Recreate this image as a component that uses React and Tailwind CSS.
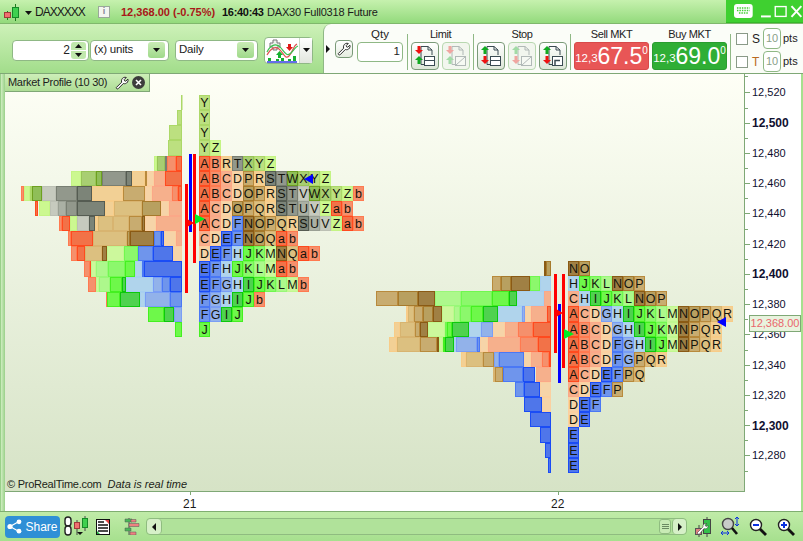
import React from "react";

const PAL = {
  A: ["#f27248", "#ff4a1e"], B: ["#f5906c", "#ff7a50"], C: ["#f6b08c", "#fba888"], D: ["#f6d4a8", "#fbd0a0"],
  E: ["#4f76ea", "#1a4cf5"], F: ["#6f95ec", "#4a78f5"], G: ["#92b2ea", "#7a9ef5"], H: ["#b0d4ec", "#a8d0f0"],
  I: ["#4fd24f", "#0cc80c"], J: ["#6ef84a", "#44f020"], K: ["#8cf86c", "#70f850"], L: ["#adf88c", "#98f878"], M: ["#ccf89c", "#c0f890"],
  N: ["#a08044", "#8a5a14"], O: ["#b8a060", "#a67a2c"], P: ["#c8ac70", "#b88a3c"], Q: ["#dcc080", "#d8b470"], R: ["#f2d095", "#f8cc88"],
  S: ["#7c8478", "#555c52"], T: ["#92988c", "#787e72"], U: ["#aab0a4", "#9aa094"], V: ["#c6cabe", "#bcc0b4"],
  W: ["#8fbe58", "#6ea020"], X: ["#a8ce72", "#98c458"], Y: ["#bce080", "#acd868"], Z: ["#ccf890", "#c4f484"],
  a: ["#f27248", "#ff4a1e"], b: ["#f5906c", "#ff7a50"],
};

const ROW = 15.125;
const rowY = (top, k) => Math.round(top + ROW * k);

const leftLetters = ["Y", "Y", "Y", "YZ", "ABRTXYZ", "ABCDPRSTWXYZ", "ABCDOPRSTVWXYZb", "ACDOPQRSTUVZab", "ACDFNOPQRSUVZab", "CDEFNOQab", "DEFHJKMNQab", "EFHJKLMab", "EFGHIJKLMb", "FGHIJb", "FGIJ", "J"];
const rightLetters = ["NO", "HJKLNOP", "CHIJKLNOP", "ACDGHIJKLMNOPQR", "ABCDGHIJKMNPQR", "ABCDFGHIJMNPQR", "ABCDFGPQR", "ACDEFPQ", "CDEFP", "DEF", "DE", "E", "E", "E"];

const leftBars = [
  [[181, 182, "Y"]],
  [[177, 182, "Y"]],
  [[169, 182, "Y"]],
  [[168, 182, "Y"]],
  [[154, 157, "Z"], [157, 165, "X"], [165, 167, "T"], [167, 176, "B"], [176, 182, "A"]],
  [[71, 81, "Z"], [81, 96, "X"], [96, 102, "W"], [102, 126, "T"], [126, 132, "S"], [132, 145, "R"], [145, 147, "P"], [147, 154, "D"], [154, 165, "C"], [165, 182, "A"]],
  [[21, 24, "b"], [24, 30, "Z"], [30, 32, "Y"], [32, 42, "W"], [42, 56, "V"], [56, 77, "T"], [77, 92, "S"], [92, 123, "R"], [123, 145, "P"], [145, 152, "D"], [152, 172, "C"], [172, 178, "B"], [178, 182, "A"]],
  [[35, 38, "a"], [39, 50, "Z"], [50, 58, "V"], [58, 66, "U"], [66, 77, "T"], [77, 105, "S"], [105, 114, "R"], [114, 142, "Q"], [142, 161, "O"], [161, 169, "D"], [169, 182, "C"]],
  [[59, 62, "b"], [62, 70, "a"], [70, 77, "Z"], [77, 89, "V"], [89, 95, "S"], [95, 98, "R"], [98, 113, "Q"], [113, 129, "Q"], [129, 142, "P"], [142, 145, "N"], [145, 156, "D"], [156, 182, "C"]],
  [[68, 71, "b"], [71, 93, "a"], [93, 127, "Q"], [127, 130, "O"], [130, 154, "N"], [154, 161, "F"], [161, 164, "E"], [164, 176, "D"], [176, 182, "C"]],
  [[71, 77, "b"], [77, 85, "a"], [85, 102, "Q"], [102, 107, "N"], [107, 124, "M"], [124, 138, "K"], [138, 153, "F"], [153, 173, "E"], [173, 182, "D"]],
  [[84, 90, "b"], [90, 91, "a"], [91, 96, "M"], [96, 108, "L"], [108, 125, "K"], [125, 135, "J"], [135, 142, "H"], [142, 144, "F"], [144, 182, "E"]],
  [[88, 96, "b"], [96, 99, "M"], [99, 110, "L"], [110, 122, "J"], [122, 126, "I"], [126, 153, "H"], [153, 162, "G"], [162, 170, "F"], [170, 182, "E"]],
  [[106, 107, "b"], [107, 120, "J"], [120, 140, "I"], [140, 145, "H"], [145, 170, "G"], [170, 182, "F"]],
  [[148, 164, "J"], [164, 174, "I"], [174, 182, "G"]],
  [[175, 182, "J"]],
];

const rightBars = [
  [[544, 546, "N"], [546, 551, "O"]],
  [[492, 501, "P"], [501, 511, "O"], [511, 530, "N"], [530, 540, "K"], [540, 551, "H"]],
  [[376, 398, "P"], [398, 418, "O"], [418, 435, "N"], [435, 461, "L"], [461, 492, "K"], [492, 509, "J"], [509, 517, "I"], [517, 544, "H"], [544, 551, "C"]],
  [[406, 408, "R"], [408, 414, "Q"], [414, 423, "P"], [423, 433, "O"], [433, 442, "N"], [442, 454, "M"], [454, 460, "L"], [460, 471, "K"], [471, 483, "J"], [483, 498, "I"], [498, 522, "H"], [522, 525, "G"], [525, 531, "D"], [531, 547, "C"], [547, 551, "A"]],
  [[394, 400, "R"], [400, 415, "Q"], [415, 420, "P"], [420, 428, "N"], [428, 445, "M"], [445, 447, "K"], [447, 452, "J"], [452, 469, "I"], [469, 481, "H"], [481, 493, "G"], [493, 505, "D"], [505, 518, "C"], [518, 533, "B"], [533, 551, "A"]],
  [[389, 397, "R"], [397, 420, "Q"], [420, 437, "P"], [437, 439, "N"], [439, 443, "M"], [443, 445, "J"], [445, 454, "I"], [454, 456, "H"], [456, 477, "G"], [477, 480, "F"], [480, 488, "D"], [488, 520, "C"], [520, 538, "B"], [538, 551, "A"]],
  [[461, 466, "R"], [466, 483, "Q"], [483, 494, "P"], [494, 499, "G"], [499, 524, "F"], [524, 531, "D"], [531, 542, "C"], [542, 549, "B"], [549, 551, "A"]],
  [[493, 495, "Q"], [495, 503, "P"], [503, 523, "F"], [523, 535, "E"], [536, 551, "C"]],
  [[515, 524, "F"], [524, 540, "E"], [540, 551, "D"]],
  [[524, 542, "E"], [542, 551, "D"]],
  [[530, 551, "E"]],
  [[540, 551, "E"]],
  [[545, 551, "E"]],
  [[548, 551, "E"]],
];

function Cell({ x, y, w, h, c }) {
  const [fill, stroke] = PAL[c];
  return <rect x={x + 0.5} y={y + 0.5} width={Math.max(w - 1, 0.5)} height={h - 1} fill={fill} stroke={stroke} />;
}

function Bars({ rows, top }) {
  return rows.map((segs, k) => {
    const y = rowY(top, k);
    const h = rowY(top, k + 1) - y;
    return segs.map(([a, b, c], i) => <Cell key={k + "-" + i} x={a} y={y} w={b - a} h={h} c={c} />);
  });
}

function Letters({ rows, left, top }) {
  return rows.map((s, k) => {
    const y = rowY(top, k);
    const h = rowY(top, k + 1) - y;
    return [...s].map((c, i) => (
      <g key={k + "-" + i}>
        <Cell x={left + i * 11} y={y} w={11} h={h} c={c} />
        <text x={left + i * 11 + 5.5} y={y + 12} textAnchor="middle" fontSize="12.5" fill="#14140c">{c}</text>
      </g>
    ));
  });
}

function Chart() {
  return (
    <svg className="block h-[417px] w-[740px]" viewBox="5 74 740 417">
      <Bars rows={leftBars} top={95} />
      <Bars rows={rightBars} top={261} />
      <Letters rows={leftLetters} left={199} top={95} />
      <Letters rows={rightLetters} left={568} top={261} />
      <rect x="185" y="184" width="3" height="109" fill="#ff0000" />
      <rect x="189" y="154" width="3" height="78" fill="#0000ff" />
      <rect x="193" y="154" width="3" height="109" fill="#ff0000" />
      <path d="M187 219 L194 223 L187 227Z" fill="#ff0000" />
      <path d="M195 214 L205 219 L195 224Z" fill="#00ee22" />
      <path d="M313 174 L304 179 L313 184Z" fill="#0000ff" />
      <rect x="554" y="274" width="3" height="79" fill="#ff0000" />
      <rect x="558" y="304" width="3" height="79" fill="#0000ff" />
      <rect x="562" y="274" width="3" height="94" fill="#ff0000" />
      <path d="M556 309 L563 313 L556 317Z" fill="#ff0000" />
      <path d="M564 329 L574 334 L564 339Z" fill="#00ee22" />
      <path d="M726 317 L717 322 L726 327Z" fill="#0000ff" />
    </svg>
  );
}

const AXIS = [
  ["12,520"], ["12,500", 1], ["12,480"], ["12,460"], ["12,440"], ["12,420"], ["12,400", 1],
  ["12,380"], ["12,360"], ["12,340"], ["12,320"], ["12,300", 1], ["12,280"],
];

function Axis() {
  return (
    <div className="relative flex w-[56px] flex-col bg-white text-[#101030]">
      <div className="h-[11.4px] pt-[2.2px]"><div className="h-px w-[3px] bg-[#7fa876]" /></div>
      {AXIS.map(([t, b]) => (
        <React.Fragment key={t}>
          <div className="flex h-[15.125px] items-center">
            <div className="h-px w-[5px] bg-[#7fa876]" />
            <span className={b ? "ml-[2px] text-[12px] leading-none font-bold" : "ml-[2px] text-[11px] leading-none"}>{t}</span>
          </div>
          <div className="flex h-[15.125px] items-center"><div className="h-px w-[3px] bg-[#7fa876]" /></div>
        </React.Fragment>
      ))}
      <div className="absolute top-[241px] left-[4px] flex h-[17px] w-[52px] items-center justify-center border border-[#7fa876] bg-[#e9f3de] text-[11px] leading-none text-[#e9666c]">12,368.00</div>
    </div>
  );
}

function Candles() {
  return (
    <svg width="18" height="18" viewBox="0 0 18 18" className="block">
      <path d="M3.5 7v9M11.5 0v17" stroke="#1e7a1e" strokeWidth="1" />
      <rect x="0.5" y="8.5" width="6" height="5" fill="#f07070" stroke="#a03a3a" />
      <rect x="8.5" y="3.5" width="6" height="10" fill="#3fd04f" stroke="#168a28" />
    </svg>
  );
}

function Tri({ dir = "down", className = "" }) {
  const d = { down: "M0 0h7L3.5 4z", right: "M0 0v8l4-4z", left: "M4 0v8L0 4z", up: "M0 4h7L3.5 0z" }[dir];
  const box = dir === "down" || dir === "up" ? [7, 4] : [4, 8];
  return <svg width={box[0]} height={box[1]} viewBox={`0 0 ${box[0]} ${box[1]}`} className={"block " + className}><path d={d} fill="#111" /></svg>;
}

function Wrench({ size = 14, stroke = "#222", fill = "#fff" }) {
  return (
    <svg width={size} height={size} viewBox="0 0 16 16" className="block">
      <path d="M1.5 13.2 7.6 7.1C7 5 7.7 2.9 9.6 1.9c1.1-.6 2.3-.6 3.3-.2L10.6 4l.3 1.5 1.4.4 2.4-2.3c.4 1.1.3 2.4-.4 3.4-1.1 1.6-3 2.2-4.8 1.6l-6 6c-.9.6-2.6-.6-2-1.4Z" fill={fill} stroke={stroke} strokeWidth="1.1" strokeLinejoin="round" />
    </svg>
  );
}

function Arrow({ x, y, up, color }) {
  const d = up
    ? `M${x} ${y + 4}L${x + 4} ${y}L${x + 8} ${y + 4}H${x + 5.5}V${y + 8}H${x + 2.5}V${y + 4}Z`
    : `M${x + 2.5} ${y}H${x + 5.5}V${y + 4}H${x + 8}L${x + 4} ${y + 8}L${x} ${y + 4}H${x + 2.5}Z`;
  return <path d={d} fill={color} />;
}

function TradeIcon({ top, kind, off }) {
  const red = "#ee1111", green = "#11aa22", ink = "#3a4a52";
  return (
    <svg width="22" height="22" viewBox="0 0 22 22" className={off ? "block opacity-35" : "block"}>
      <path d="M7 1.5H14L18 5V10M14 1.5V5H18" fill="none" stroke={ink} />
      <path d="M7 1.5V19.5H11" fill="none" stroke={ink} />
      <Arrow x={1} y={1} up={!top} color={top ? red : green} />
      <Arrow x={1} y={11} up={top} color={top ? green : red} />
      {kind === "rows" && <><rect x="10.5" y="11.5" width="10" height="4" fill="#fff" stroke={ink} /><rect x="10.5" y="15.5" width="10" height="5" fill="#fff" stroke={ink} /></>}
      {kind === "slash" && <><rect x="10.5" y="11.5" width="10" height="9" fill="#fff" stroke={ink} /><path d="M11 20L20 12" stroke={ink} /></>}
      {kind === "step" && <><rect x="10.5" y="11.5" width="10" height="9" fill="#fff" stroke={ink} /><path d="M13 20.5V15.5H18" fill="none" stroke={ink} strokeWidth="1.5" /></>}
    </svg>
  );
}

function TradeBtn(props) {
  return (
    <div className={"flex h-[28px] w-[28px] items-center justify-center rounded-[4px] border " + (props.off ? "border-[#b8d8b0] bg-[#f2f6ee]" : "border-[#7a9a78] bg-linear-to-b from-[#ffffff] to-[#dde6d8]")}>
      <TradeIcon {...props} />
    </div>
  );
}

const Divider = () => <div className="mt-[10px] h-[36px] w-px bg-[#8fb885]" />;

function Select({ label, w }) {
  return (
    <div className={"flex h-[21px] items-center justify-between rounded-[4px] border border-[#8fb885] bg-white pr-[3px] pl-[3px] text-[11.5px] tracking-[-0.2px] text-[#222] " + w}>
      <span>{label}</span>
      <div className="flex h-[16px] w-[17px] items-center justify-center rounded-[3px] bg-linear-to-b from-[#c9ecb5] to-[#9fd98a]"><Tri /></div>
    </div>
  );
}

function Pts({ label, cls }) {
  return (
    <div className="flex items-center">
      <div className="h-[12px] w-[12px] border border-[#8a9a88] bg-white" />
      <span className={"ml-[4px] w-[11px] text-[12px] " + cls}>{label}</span>
      <div className="flex h-[21px] w-[18px] items-center justify-center rounded-[4px] border border-[#8fb885] bg-white text-[11px] text-[#8aa088]">10</div>
      <span className="ml-[2px] text-[11px] text-[#222]">pts</span>
    </div>
  );
}

function Price({ big, bg, border }) {
  return (
    <div className={"flex h-[28px] w-[75px] items-center justify-center rounded-[3px] border text-white " + bg + " " + border}>
      <span className="mt-[6px] text-[11.5px] leading-none tracking-normal">12,3</span>
      <span className="text-[23px] leading-none tracking-normal">{big}</span>
      <span className="mb-[10px] text-[10px] leading-none tracking-normal">0</span>
    </div>
  );
}

const LABEL = "mt-[3px] leading-[15px] whitespace-nowrap";
const COL = "ml-[3px] flex flex-col items-center text-[11px] tracking-[-0.4px] text-[#222]";

function Header() {
  return (
    <div className="flex h-[24px] border-b border-[#7fb86c] bg-linear-to-b from-[#c6f1ae] to-[#93da7c]">
      <div className="flex flex-1 items-center pt-[1px] text-[11px] whitespace-nowrap text-[#1a1a1a]">
        <div className="mt-[2px] ml-[4px]"><Candles /></div>
        <Tri className="mt-[1px] ml-[3px]" />
        <span className="ml-[3px] w-[60px] text-[12px] tracking-[-1px]">DAXXXXX</span>
        <div className="ml-[3px] flex h-[12px] w-[12px] items-center justify-center border border-[#9aa89a] bg-[#f4f6f0] text-[9px] font-bold text-[#889]">i</div>
        <span className="ml-[11px] w-[101px] font-bold text-[#a81818]">12,368.00 (-0.75%)</span>
        <span className="w-[43px] font-bold tracking-[-0.3px] text-[#101010]">16:40:43</span>
        <span className="ml-[2px] tracking-[-0.2px]">DAX30 Full0318 Future</span>
      </div>
      <div className="flex w-[77px] items-center border-b border-[#35b82a] bg-[#3fd030] pl-[8px]">
        <svg width="19" height="14" viewBox="0 0 19 14" className="block">
          <rect width="19" height="14" rx="3" fill="#fff" />
          <path d="M3 4h13M3 6.5h13M5 9h9" stroke="#3fd030" strokeWidth="1.4" strokeDasharray="1.5 1" />
        </svg>
        <svg width="44" height="14" viewBox="0 0 44 14" className="ml-[7px] block">
          <path d="M1 12.5H11" stroke="#fff" strokeWidth="2" />
          <rect x="15.5" y="2.5" width="11" height="10" fill="none" stroke="#fff" strokeWidth="1.4" />
          <path d="M32 2L42 13M42 2L32 13" stroke="#fff" strokeWidth="2" />
        </svg>
      </div>
    </div>
  );
}

function Toolbar() {
  return (
    <div className="flex h-[50px] border-b border-[#7fa876] bg-linear-to-b from-[#cdf1b8] to-[#a2dd8b]">
      <div className="flex w-[323px] items-center pt-[3px] pl-[12px]">
        <div className="flex h-[21px] w-[77px] items-center justify-end rounded-[4px] border border-[#8fb885] bg-white pr-[2px] text-[12px] text-[#222]">
          <span className="mr-[1px]">2</span>
          <div className="flex w-[15px] flex-col gap-px">
            <div className="flex h-[8px] items-center justify-center rounded-t-[3px] bg-[#c0e8ac]"><Tri dir="up" /></div>
            <div className="flex h-[8px] items-center justify-center rounded-b-[3px] bg-[#c0e8ac]"><Tri /></div>
          </div>
        </div>
        <Select label="(x) units" w="ml-[1px] w-[79px]" />
        <Select label="Daily" w="ml-[6px] w-[83px]" />
        <div className="ml-[6px] flex h-[27px] w-[49px] rounded-[4px] border border-[#8fb885] bg-white">
          <svg width="34" height="25" viewBox="0 0 34 25" className="block">
            <path d="M5 5h3V2h4v3h3v4h-3v3H8V9H5z" fill="#eef0ee" stroke="#777" />
            <path d="M2 17C6 10 10 8 14 11S20 22 24 18 28 8 32 6" fill="none" stroke="#e05050" strokeWidth="1.2" />
            <path d="M2 14C6 6 12 5 16 10S22 19 26 15 30 9 33 8" fill="none" stroke="#3cc050" strokeWidth="1.2" />
            <path d="M11 17l3.500-4 3.500 4h-2v3h-3v-3z" fill="#16b030" />
            <path d="M23 6h3v3h2l-3.500 4-3.500-4h2z" fill="#e01818" />
            <path d="M3 20h3v3H3zM11 21h3v2h-3zM16 20h3v3h-3zM23 21h3v2h-3zM28 18h3v5h-3z" fill="#18b030" />
            <path d="M2 24H32" stroke="#2030e0" strokeWidth="1.4" />
          </svg>
          <div className="flex flex-1 items-center justify-center border-l border-[#c8d8c4] bg-linear-to-b from-[#ffffff] to-[#e2e6de]"><Tri /></div>
        </div>
      </div>
      <div className="flex flex-1 rounded-tl-[8px] border-l border-[#8fb885] bg-[#fbfdf8]">
        <div className="flex w-[11px] items-center pl-[2px]"><Tri dir="right" /></div>
        <div className="mt-[16px] flex h-[18px] w-[18px] items-center justify-center rounded-[4px] border border-[#7a9a78] bg-linear-to-b from-[#ffffff] to-[#e4ecdf]"><Wrench size={14} /></div>
        <div className="ml-[4px] flex w-[46px] flex-col items-center text-[11.5px] text-[#222]">
          <span className={LABEL}>Qty</span>
          <div className="flex h-[20px] w-full items-center justify-end rounded-[4px] border border-[#8fb885] bg-white pr-[2px]">1</div>
        </div>
        <div className="ml-[4px]"><Divider /></div>
        <div className={COL}>
          <span className={LABEL}>Limit</span>
          <div className="flex gap-[3px]"><TradeBtn top kind="rows" /><TradeBtn top kind="slash" off /></div>
        </div>
        <div className="ml-[3px]"><Divider /></div>
        <div className={COL}>
          <span className={LABEL}>Stop</span>
          <div className="flex gap-[3px]"><TradeBtn kind="rows" /><TradeBtn kind="slash" off /><TradeBtn kind="step" /></div>
        </div>
        <div className="ml-[3px]"><Divider /></div>
        <div className={COL}>
          <span className={LABEL}>Sell MKT</span>
          <Price big="67.5" bg="bg-[#e85656]" border="border-[#d84a4a]" />
        </div>
        <div className={COL}>
          <span className={LABEL}>Buy MKT</span>
          <Price big="69.0" bg="bg-[#2fae35]" border="border-[#2a9c30]" />
        </div>
        <div className="ml-[3px]"><Divider /></div>
        <div className="ml-[5px] flex flex-col gap-[2px] pt-[4px]">
          <Pts label="S" cls="text-[#222]" />
          <Pts label="T" cls="text-[#b86a20]" />
        </div>
      </div>
    </div>
  );
}

function BottomBar() {
  return (
    <div className="flex h-[30px] items-center border-t border-[#7fae70] bg-linear-to-b from-[#c0eba8] to-[#a6e08e] pl-[5px]">
      <div className="flex h-[22px] w-[55px] items-center justify-center gap-[3px] rounded-[4px] bg-[#2f8fd6] text-[12px] text-white">
        <svg width="15" height="15" viewBox="0 0 15 15" className="block">
          <path d="M3 7.500L12 2.500M3 7.500L12 12.500" stroke="#fff" strokeWidth="1.3" />
          <circle cx="3" cy="7.500" r="2.600" fill="#fff" /><circle cx="12" cy="2.800" r="2.400" fill="#fff" /><circle cx="12" cy="12.200" r="2.400" fill="#fff" />
        </svg>
        <span>Share</span>
      </div>
      <svg width="24" height="21" viewBox="0 0 24 21" className="ml-[4px] block">
        <rect x="1" y="1" width="6" height="9" rx="3" fill="#fff" stroke="#222" strokeWidth="1.4" />
        <rect x="1" y="10" width="6" height="9" rx="3" fill="#fff" stroke="#222" strokeWidth="1.4" />
        <path d="M13 4v15M21 0v15" stroke="#444" />
        <rect x="10.500" y="6.500" width="5" height="6" fill="#f07070" stroke="#a03a3a" />
        <rect x="18.500" y="2.500" width="5" height="9" fill="#3fd04f" stroke="#168a28" />
        <path d="M13 16h6l-3 3z" fill="#111" />
      </svg>
      <svg width="14" height="16" viewBox="0 0 14 16" className="ml-[8px] block">
        <rect x="0.500" y="0.500" width="13" height="15" fill="#fff" stroke="#111" />
        <path d="M2 3h6M2 6h10M2 9h10M2 12h10" stroke="#111" strokeWidth="1.3" />
        <path d="M9 1h4v4z" fill="#e04040" /><path d="M1 15v-3l3 3z" fill="#20b040" />
      </svg>
      <svg width="17" height="17" viewBox="0 0 17 17" className="ml-[14px] block">
        <path d="M5 0v17" stroke="#555" />
        <path d="M1 1h7v3H1zM1 10h6v3H1z" fill="#48b858" stroke="#555" strokeWidth="0.5" />
        <path d="M5 5.500h10v3H5zM7 1.500h5v2.500H7zM6 14h6v3H6z" fill="#ee8080" stroke="#555" strokeWidth="0.5" />
      </svg>
      <div className="ml-[5px] flex h-[17px] w-[541px] items-center rounded-[4px] border border-[#8fbc80] bg-[#b0e29a]">
        <div className="flex h-full w-[15px] items-center justify-center rounded-[4px] border-r border-[#8fbc80] bg-[#d6f0c8]"><Tri dir="left" /></div>
        <div className="flex-1" />
        <div className="flex h-full w-[12px] flex-col items-center justify-center gap-px rounded-[3px] border border-[#8fbc80] bg-[#c8ebb5]">
          <div className="h-px w-[7px] bg-[#6b8a62]" /><div className="h-px w-[7px] bg-[#6b8a62]" /><div className="h-px w-[7px] bg-[#6b8a62]" />
        </div>
        <div className="ml-px flex h-full w-[14px] items-center justify-center rounded-[4px] border-l border-[#8fbc80] bg-[#d6f0c8]"><Tri dir="right" /></div>
      </div>
      <svg width="16" height="20" viewBox="0 0 16 20" className="ml-[8px] block">
        <path d="M4 8v12M12 0v20" stroke="#444" />
        <rect x="0.500" y="11.500" width="6" height="6" fill="#e08080" stroke="#555" />
        <rect x="8.500" y="2.500" width="7" height="14" fill="#34c04a" stroke="#444" />
        <path d="M2 16l6-6c-.500-2 1-4 4-3.500L10 8l1 1.500 2-1c.5 2.500-2 4-4 3l-5 6z" fill="#fff" stroke="#333" strokeWidth="0.5" />
      </svg>
      <svg width="19" height="19" viewBox="0 0 19 19" className="ml-[10px] block">
        <circle cx="7" cy="7" r="5.500" fill="#c8ccc8" stroke="#444" strokeWidth="1.400" />
        <path d="M11 11l5 6" stroke="#111" strokeWidth="2.600" />
        <path d="M16 0v9M14 2l2-2 2 2M14 7l2 2 2-2M0 16h8M2 14l-2 2 2 2M6 14l2 2-2 2" fill="none" stroke="#0a30e0" />
      </svg>
      <svg width="18" height="18" viewBox="0 0 18 18" className="ml-[9px] block">
        <circle cx="7" cy="7" r="5.500" fill="#fff" stroke="#222" strokeWidth="1.400" />
        <path d="M4 7h6" stroke="#0a30e0" strokeWidth="2" />
        <path d="M11 11l6 6" stroke="#111" strokeWidth="2.800" />
      </svg>
      <svg width="18" height="18" viewBox="0 0 18 18" className="ml-[10px] block">
        <circle cx="7" cy="7" r="5.500" fill="#fff" stroke="#222" strokeWidth="1.400" />
        <path d="M4 7h6M7 4v6" stroke="#0a30e0" strokeWidth="2" />
        <path d="M11 11l6 6" stroke="#111" strokeWidth="2.800" />
      </svg>
    </div>
  );
}

export default function App() {
  return (
    <div className="flex h-[541px] w-[803px] flex-col overflow-hidden bg-white font-['Liberation_Sans',Arial,sans-serif]">
      <Header />
      <Toolbar />
      <div className="flex h-[437px]">
        <div className="w-[5px] border-l border-[#9ad08a] bg-linear-to-r from-[#cfeec0] to-[#9ad08a]" />
        <div className="flex w-[740px] flex-col">
          <div className="relative h-[418px] border-r border-b border-[#7fa876] bg-linear-to-b from-[#feffF6] to-[#d6e3c6]">
            <Chart />
            <div className="absolute top-0 left-0 flex h-[18px] w-[145px] items-center border-r border-b border-[#7fa876] bg-linear-to-b from-[#cdeeb8] to-[#aedd96] pl-[3px] text-[11px] whitespace-nowrap text-[#1c1c1c]">
              <span className="w-[103px] tracking-[-0.3px]">Market Profile (10 30)</span>
              <span className="ml-[4px]"><Wrench size={14} /></span>
              <span className="ml-[3px] flex h-[13px] w-[13px] items-center justify-center rounded-full bg-[#3c3c3c]">
                <svg width="7" height="7" viewBox="0 0 7 7" className="block"><path d="M1 1l5 5M6 1L1 6" stroke="#fff" strokeWidth="1.600" /></svg>
              </span>
            </div>
            <div className="absolute bottom-[0px] left-[2px] text-[11px] leading-[14px] whitespace-nowrap text-[#1c2418]">
              <span className="tracking-[-0.25px]">© ProRealTime.com</span><span className="ml-[6px] italic">Data is real time</span>
            </div>
          </div>
          <div className="relative flex h-[19px] justify-between bg-white text-[12px] text-[#1a1a1a]">
            <div className="absolute top-0 left-[185px] h-[3px] w-px bg-[#7fa876]" />
            <span className="absolute top-[5px] left-[178px] leading-[14px]">21</span>
            <div className="absolute top-0 left-[553px] h-[3px] w-px bg-[#7fa876]" />
            <span className="absolute top-[5px] left-[546px] leading-[14px]">22</span>
          </div>
        </div>
        <Axis />
        <div className="w-[2px] bg-[#a6e08e]" />
      </div>
      <BottomBar />
    </div>
  );
}
